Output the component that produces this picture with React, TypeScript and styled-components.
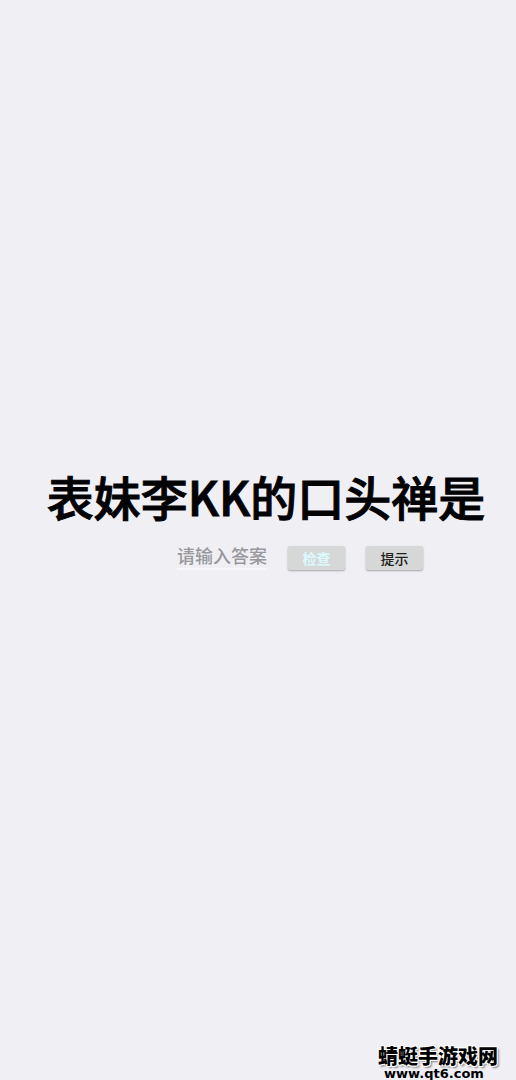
import { FormEvent, useState } from 'react';
import styled, { createGlobalStyle } from 'styled-components';

const GlobalStyle = createGlobalStyle`
    html,
    body,
    #root {
        height: 100%;
    }

    body {
        margin: 0;
        background-color: #efeff4;
        font-family: 'Noto Sans CJK SC', sans-serif;
    }
`;

const Page = styled.div`
    min-height: 100%;
    box-sizing: border-box;
    display: flex;
    flex-direction: column;
`;

const Content = styled.main`
    flex: 1;
    display: flex;
    flex-direction: column;
    align-items: center;
    justify-content: center;
    padding: 0 0 10px 16px;
`;

const Question = styled.h1`
    margin: 0;
    color: #030305;
    font-size: 47px;
    font-weight: 500;
    line-height: 64px;
    white-space: nowrap;
    -webkit-text-stroke: 1px #030305;
`;

const AnswerForm = styled.form`
    display: flex;
    align-items: center;
    gap: 21px;
    margin-top: 18px;
    padding-left: 68px;
`;

const AnswerInput = styled.input`
    width: 90px;
    height: 24px;
    box-sizing: border-box;
    padding: 0 0 4px;
    border: 0;
    border-bottom: 2px solid #f7f7f9;
    border-radius: 0;
    outline: none;
    background: transparent;
    color: #333;
    font-family: inherit;
    font-size: 18px;
    font-weight: 500;
    line-height: 18px;

    &::placeholder {
        color: #98989c;
        opacity: 1;
    }
`;

const Button = styled.button<{ $light?: boolean }>`
    width: 57px;
    height: 24px;
    padding: 0;
    border: 0;
    border-radius: 2px;
    background-color: #d5d8d7;
    box-shadow: 0 1px 2px rgba(0, 0, 0, 0.3);
    color: ${({ $light }) => ($light ? '#dcfbff' : '#1f2020')};
    font-family: inherit;
    font-size: 14px;
    font-weight: ${({ $light }) => ($light ? 700 : 500)};
    line-height: 24px;
`;

const Footer = styled.footer`
    display: flex;
    flex-direction: column;
    align-items: center;
    align-self: flex-end;
    padding-right: 18px;
    color: #000;
`;

const SiteName = styled.span`
    font-size: 20px;
    font-weight: 900;
    line-height: 24px;
    text-shadow:
        -1px -1px 0 #fff,
        1px -1px 0 #fff,
        -1px 1px 0 #fff,
        1px 1px 0 #fff,
        2px 2px 2px rgba(0, 0, 0, 0.5);
`;

const SiteUrl = styled.span`
    padding-right: 8px;
    font-family: 'DejaVu Sans', sans-serif;
    font-size: 13px;
    font-weight: 700;
    line-height: 12px;
`;

const App = () => {
    const [answer, setAnswer] = useState('');

    const handleSubmit = (event: FormEvent) => {
        event.preventDefault();
    };

    return (
        <>
            <GlobalStyle />
            <Page>
                <Content>
                    <Question>表妹李KK的口头禅是</Question>
                    <AnswerForm onSubmit={handleSubmit}>
                        <AnswerInput
                            aria-label="请输入答案"
                            placeholder="请输入答案"
                            value={answer}
                            onChange={(event) => setAnswer(event.target.value)}
                        />
                        <Button type="submit" $light>
                            检查
                        </Button>
                        <Button type="button">提示</Button>
                    </AnswerForm>
                </Content>
                <Footer>
                    <SiteName>蜻蜓手游戏网</SiteName>
                    <SiteUrl>www.qt6.com</SiteUrl>
                </Footer>
            </Page>
        </>
    );
};

export default App;
